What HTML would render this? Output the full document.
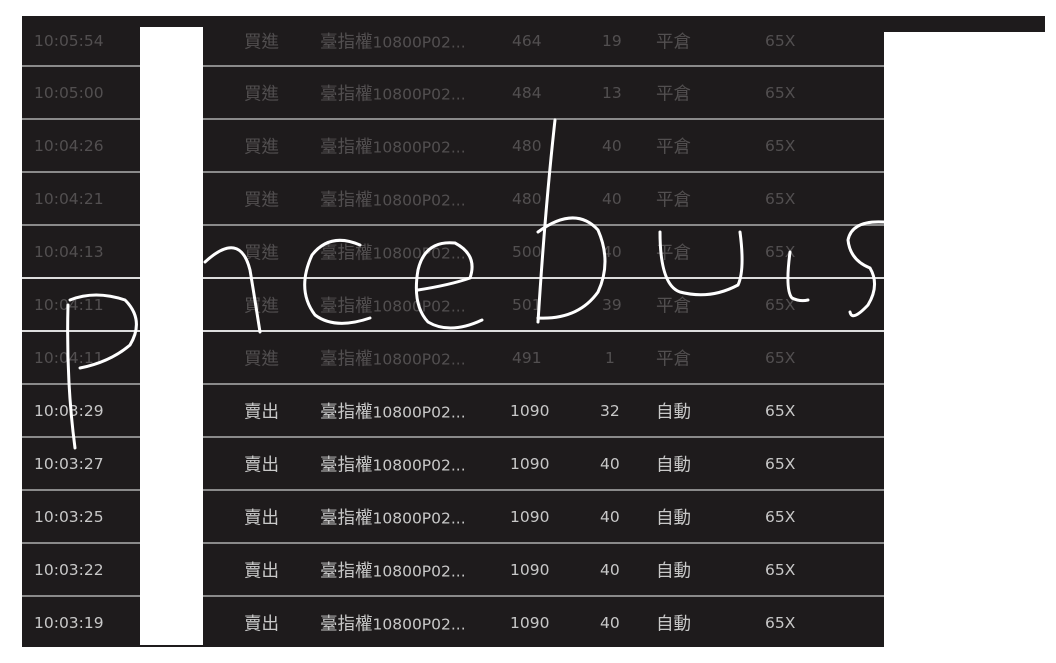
<!DOCTYPE html>
<html><head><meta charset="utf-8"><style>
body{margin:0;width:1056px;height:663px;background:#fff;position:relative;overflow:hidden;font-family:"DejaVu Sans","Noto Sans CJK TC",sans-serif}
#tbl{position:absolute;left:22px;top:16px;width:862px;height:631px;background:#1e1b1c}
#bar{position:absolute;left:22px;top:16px;width:1023px;height:16px;background:#1e1b1c}
.row{position:absolute;left:22px;width:862px;height:53px;font-size:15.5px}
.row span{position:absolute;top:50%;transform:translateY(-50%);white-space:nowrap}
.row span.c{font-size:17.5px;font-family:"Noto Sans CJK TC",sans-serif}
.ln{position:absolute;left:22px;width:862px;height:2px;background:#8a8a8a}
.dim{color:#524f50}.br{color:#c8c8c8}
#strip{position:absolute;left:140px;top:27px;width:63px;height:618px;background:#fff}
</style></head><body>
<div id="tbl"></div><div id="bar"></div>
<div class="row dim" style="top:16px;height:50px"><span style="left:12px">10:05:54</span><span class="c" style="left:222px">買進</span><span style="left:298px"><b class="c" style="font-weight:normal;font-size:17.5px;font-family:'Noto Sans CJK TC'">臺指權</b>10800P02...</span><span style="left:490px">464</span><span style="left:580px">19</span><span class="c" style="left:634px">平倉</span><span style="left:743px">65X</span></div>
<div class="row dim" style="top:66px"><span style="left:12px">10:05:00</span><span class="c" style="left:222px">買進</span><span style="left:298px"><b style="font-weight:normal;font-size:17.5px;font-family:'Noto Sans CJK TC'">臺指權</b>10800P02...</span><span style="left:490px">484</span><span style="left:580px">13</span><span class="c" style="left:634px">平倉</span><span style="left:743px">65X</span></div>
<div class="row dim" style="top:119px"><span style="left:12px">10:04:26</span><span class="c" style="left:222px">買進</span><span style="left:298px"><b style="font-weight:normal;font-size:17.5px;font-family:'Noto Sans CJK TC'">臺指權</b>10800P02...</span><span style="left:490px">480</span><span style="left:580px">40</span><span class="c" style="left:634px">平倉</span><span style="left:743px">65X</span></div>
<div class="row dim" style="top:172px"><span style="left:12px">10:04:21</span><span class="c" style="left:222px">買進</span><span style="left:298px"><b style="font-weight:normal;font-size:17.5px;font-family:'Noto Sans CJK TC'">臺指權</b>10800P02...</span><span style="left:490px">480</span><span style="left:580px">40</span><span class="c" style="left:634px">平倉</span><span style="left:743px">65X</span></div>
<div class="row dim" style="top:225px"><span style="left:12px">10:04:13</span><span class="c" style="left:222px">買進</span><span style="left:298px"><b style="font-weight:normal;font-size:17.5px;font-family:'Noto Sans CJK TC'">臺指權</b>10800P02...</span><span style="left:490px">500</span><span style="left:580px">40</span><span class="c" style="left:634px">平倉</span><span style="left:743px">65X</span></div>
<div class="row dim" style="top:278px"><span style="left:12px">10:04:11</span><span class="c" style="left:222px">買進</span><span style="left:298px"><b style="font-weight:normal;font-size:17.5px;font-family:'Noto Sans CJK TC'">臺指權</b>10800P02...</span><span style="left:490px">501</span><span style="left:580px">39</span><span class="c" style="left:634px">平倉</span><span style="left:743px">65X</span></div>
<div class="row dim" style="top:331px"><span style="left:12px">10:04:11</span><span class="c" style="left:222px">買進</span><span style="left:298px"><b style="font-weight:normal;font-size:17.5px;font-family:'Noto Sans CJK TC'">臺指權</b>10800P02...</span><span style="left:490px">491</span><span style="left:583px">1</span><span class="c" style="left:634px">平倉</span><span style="left:743px">65X</span></div>
<div class="row br" style="top:384px"><span style="left:12px">10:03:29</span><span class="c" style="left:222px">賣出</span><span style="left:298px"><b style="font-weight:normal;font-size:17.5px;font-family:'Noto Sans CJK TC'">臺指權</b>10800P02...</span><span style="left:488px">1090</span><span style="left:578px">32</span><span class="c" style="left:634px">自動</span><span style="left:743px">65X</span></div>
<div class="row br" style="top:437px"><span style="left:12px">10:03:27</span><span class="c" style="left:222px">賣出</span><span style="left:298px"><b style="font-weight:normal;font-size:17.5px;font-family:'Noto Sans CJK TC'">臺指權</b>10800P02...</span><span style="left:488px">1090</span><span style="left:578px">40</span><span class="c" style="left:634px">自動</span><span style="left:743px">65X</span></div>
<div class="row br" style="top:490px"><span style="left:12px">10:03:25</span><span class="c" style="left:222px">賣出</span><span style="left:298px"><b style="font-weight:normal;font-size:17.5px;font-family:'Noto Sans CJK TC'">臺指權</b>10800P02...</span><span style="left:488px">1090</span><span style="left:578px">40</span><span class="c" style="left:634px">自動</span><span style="left:743px">65X</span></div>
<div class="row br" style="top:543px"><span style="left:12px">10:03:22</span><span class="c" style="left:222px">賣出</span><span style="left:298px"><b style="font-weight:normal;font-size:17.5px;font-family:'Noto Sans CJK TC'">臺指權</b>10800P02...</span><span style="left:488px">1090</span><span style="left:578px">40</span><span class="c" style="left:634px">自動</span><span style="left:743px">65X</span></div>
<div class="row br" style="top:596px"><span style="left:12px">10:03:19</span><span class="c" style="left:222px">賣出</span><span style="left:298px"><b style="font-weight:normal;font-size:17.5px;font-family:'Noto Sans CJK TC'">臺指權</b>10800P02...</span><span style="left:488px">1090</span><span style="left:578px">40</span><span class="c" style="left:634px">自動</span><span style="left:743px">65X</span></div>
<div class="ln" style="top:65px"></div><div class="ln" style="top:118px"></div><div class="ln" style="top:171px"></div><div class="ln" style="top:224px"></div><div class="ln" style="top:277px;background:#ddd"></div><div class="ln" style="top:330px;background:#ddd"></div><div class="ln" style="top:383px"></div><div class="ln" style="top:436px"></div><div class="ln" style="top:489px"></div><div class="ln" style="top:542px"></div><div class="ln" style="top:595px"></div>
<div id="strip"></div>
<svg style="position:absolute;left:0;top:0" width="1056" height="663" fill="none" stroke="#fff" stroke-width="3" stroke-linecap="round">
<path d="M68 305 Q66 380 75 448"/>
<path d="M70 300 Q95 290 125 300 Q145 320 130 345 Q110 362 80 368"/>
<path d="M205 262 Q240 230 250 270 Q255 300 260 332"/>
<path d="M360 245 Q330 232 312 255 Q296 290 315 315 Q335 330 370 318"/>
<path d="M418 290 Q450 285 470 278 Q478 255 455 243 Q425 240 418 270 Q412 305 428 322 Q450 335 482 320"/>
<path d="M555 120 Q545 210 538 322"/>
<path d="M538 232 Q575 205 598 230 Q612 262 598 292 Q578 320 538 318"/>
<path d="M660 232 Q660 285 680 292 Q710 300 738 285 Q745 270 740 232"/>
<path d="M790 252 Q785 290 792 298 Q800 302 808 300"/>
<path d="M884 222 Q852 220 848 240 Q850 260 870 268 Q880 285 868 305 Q852 322 850 312"/>
</svg>
</body></html>
